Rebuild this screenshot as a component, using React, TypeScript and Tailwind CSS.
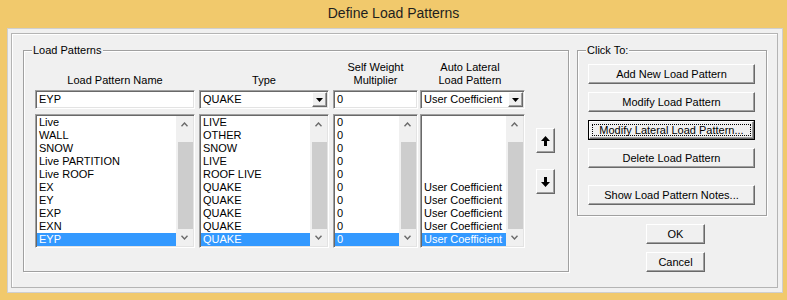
import React from "react";

const names = ["Live", "WALL", "SNOW", "Live PARTITION", "Live ROOF", "EX", "EY", "EXP", "EXN", "EYP"];
const types = ["LIVE", "OTHER", "SNOW", "LIVE", "ROOF LIVE", "QUAKE", "QUAKE", "QUAKE", "QUAKE", "QUAKE"];
const mults = ["0", "0", "0", "0", "0", "0", "0", "0", "0", "0"];
const autos = ["", "", "", "", "", "User Coefficient", "User Coefficient", "User Coefficient", "User Coefficient", "User Coefficient"];

const sunken =
  "border border-t-[#a0a0a0] border-l-[#a0a0a0] border-r-white border-b-white shadow-[inset_1px_1px_0_#696969,inset_-1px_-1px_0_#e3e3e3] p-[1px] bg-white";
const raised =
  "border border-t-white border-l-white border-r-[#696969] border-b-[#696969] shadow-[inset_-1px_-1px_0_#a0a0a0] bg-[#f0f0f0]";

function Chevron({ up }: { up?: boolean }) {
  return (
    <svg width="7" height="5" viewBox="0 0 7 5">
      <polyline
        points={up ? "0.5,4.2 3.5,1 6.5,4.2" : "0.5,0.8 3.5,4 6.5,0.8"}
        fill="none"
        stroke="#6a6a6a"
        strokeWidth="1.4"
      />
    </svg>
  );
}

function ScrollBar() {
  return (
    <div className="w-[17px] flex flex-col bg-[#f0f0f0] shrink-0">
      <div className="h-[17px] flex items-center justify-center">
        <Chevron up />
      </div>
      <div className="h-[9px]" />
      <div className="h-[87px] ml-[2px] bg-[#cdcdcd]" />
      <div className="h-[17px] flex items-center justify-center">
        <Chevron />
      </div>
    </div>
  );
}

function ListBox({ items, className }: { items: string[]; className: string }) {
  return (
    <div className={`${sunken} ${className} h-[134px] flex`}>
      <div className="flex-1 flex flex-col min-w-0">
        {items.map((t, i) => (
          <div
            key={i}
            className={`h-[13px] leading-[13px] pl-[2px] whitespace-nowrap overflow-hidden ${
              i === items.length - 1 ? "bg-[#3399ff] text-white" : ""
            }`}
          >
            {t}
          </div>
        ))}
      </div>
      <ScrollBar />
    </div>
  );
}

function TextBox({ value, className }: { value: string; className: string }) {
  return (
    <div className={`${sunken} ${className} h-[19px] flex items-center`}>
      <span className="pl-[2px] leading-[15px]">{value}</span>
    </div>
  );
}

function Combo({ value, className }: { value: string; className: string }) {
  return (
    <div className={`${sunken} ${className} h-[19px] flex`}>
      <span className="flex-1 pl-[2px] leading-[15px] whitespace-nowrap overflow-hidden">{value}</span>
      <div className={`${raised} w-[15px] h-[15px] flex items-center justify-center`}>
        <svg width="7" height="4" viewBox="0 0 7 4">
          <polygon points="0,0 7,0 3.5,4" fill="#000" />
        </svg>
      </div>
    </div>
  );
}

function Header({ l1, l2, className }: { l1?: string; l2: string; className: string }) {
  return (
    <div className={`${className} h-[26px] flex flex-col justify-end items-center text-center leading-[13px]`}>
      {l1 && <div>{l1}</div>}
      <div>{l2}</div>
    </div>
  );
}

function Button({ label, className }: { label: string; className: string }) {
  return (
    <div className={`${raised} ${className} h-[20px] flex items-center justify-center leading-[13px] whitespace-nowrap`}>
      {label}
    </div>
  );
}

function ArrowButton({ up }: { up?: boolean }) {
  return (
    <div className={`${raised} w-[19px] h-[25px] flex items-center justify-center`}>
      <svg width="9" height="10" viewBox="0 0 9 10">
        <polygon
          points={up ? "4.5,0 9,5 6,5 6,10 3,10 3,5 0,5" : "4.5,10 9,5 6,5 6,0 3,0 3,5 0,5"}
          fill="#000"
        />
      </svg>
    </div>
  );
}

export default function App() {
  return (
    <div className="w-[787px] h-[300px] bg-[#f1c96c] flex flex-col font-['Liberation_Sans',Arial,sans-serif] text-[11px] text-black">
      <div className="h-[28px] flex items-center justify-center text-[14px] text-[#1e1e1e] pb-[1px]">
        Define Load Patterns
      </div>
      <div className="ml-[7px] w-[776px] h-[265px] bg-[#f0f0f0] border border-[#cfcfcf] pl-[3px] pr-[4px] pt-[4px] pb-[4px] flex">
        <div className="flex-1 border border-[#b4b4b4] shadow-[inset_1px_1px_0_#fff] flex items-start">
          {/* Load Patterns group */}
          <div className="relative ml-[11px] mt-[16px] w-[546px] h-[222px] border border-[#a0a0a0] shadow-[inset_1px_1px_0_#fff,1px_1px_0_#fff] pt-[10px] pl-[11px] flex items-start">
            <span className="absolute left-[8px] top-[-7px] px-[1px] bg-[#f0f0f0] leading-[13px]">Load Patterns</span>
            <div className="flex flex-col w-[160px]">
              <Header l2="Load Pattern Name" className="w-[160px]" />
              <TextBox value="EYP" className="mt-[3px] w-[160px]" />
              <ListBox items={names} className="mt-[5px] w-[160px]" />
            </div>
            <div className="flex flex-col w-[130px] ml-[4px]">
              <Header l2="Type" className="w-[130px]" />
              <Combo value="QUAKE" className="mt-[3px] w-[130px]" />
              <ListBox items={types} className="mt-[5px] w-[130px]" />
            </div>
            <div className="flex flex-col w-[85px] ml-[4px]">
              <Header l1="Self Weight" l2="Multiplier" className="w-[85px]" />
              <TextBox value="0" className="mt-[3px] w-[85px]" />
              <ListBox items={mults} className="mt-[5px] w-[85px]" />
            </div>
            <div className="flex flex-col w-[105px] ml-[2px]">
              <Header l1="Auto Lateral" l2="Load Pattern" className="w-[100px]" />
              <Combo value="User Coefficient" className="mt-[3px] w-[105px]" />
              <ListBox items={autos} className="mt-[5px] w-[105px]" />
            </div>
            <div className="flex flex-col ml-[11px] mt-[67px] gap-[16px]">
              <ArrowButton up />
              <ArrowButton />
            </div>
          </div>

          {/* Right column */}
          <div className="ml-[8px] mt-[16px] w-[190px] flex flex-col">
            <div className="relative h-[166px] border border-[#a0a0a0] shadow-[inset_1px_1px_0_#fff,1px_1px_0_#fff] pl-[10px] pt-[13px] flex flex-col">
              <span className="absolute left-[8px] top-[-7px] px-[1px] bg-[#f0f0f0] leading-[13px]">Click To:</span>
              <Button label="Add New Load Pattern" className="w-[167px]" />
              <Button label="Modify Load Pattern" className="w-[167px] mt-[8px]" />
              <div className="w-[167px] h-[20px] mt-[8px] border border-black">
                <div className={`${raised} relative h-[18px] flex items-center justify-center leading-[13px] whitespace-nowrap`}>
                  <span className="absolute inset-[2px] border border-dotted border-black" />
                  Modify Lateral Load Pattern...
                </div>
              </div>
              <Button label="Delete Load Pattern" className="w-[167px] mt-[8px]" />
              <Button label="Show Load Pattern Notes..." className="w-[167px] mt-[17px]" />
            </div>
            <Button label="OK" className="w-[59px] ml-[69px] mt-[8px]" />
            <Button label="Cancel" className="w-[59px] ml-[69px] mt-[8px]" />
          </div>
        </div>
      </div>
    </div>
  );
}
